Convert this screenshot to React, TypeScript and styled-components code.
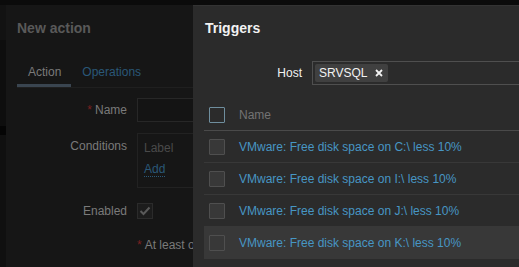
import React from "react";
import styled, { createGlobalStyle } from "styled-components";

const Global = createGlobalStyle`
  html, body { margin: 0; padding: 0; background: #0b0b0b; overflow: hidden; }
  body { font-family: "Liberation Sans", Arial, sans-serif; font-size: 12px; }
  * { box-sizing: border-box; }
`;

const Desktop = styled.div`
  position: relative;
  width: 519px;
  height: 267px;
  overflow: hidden;
  background: linear-gradient(to bottom, #0b0b0b 0, #0b0b0b 5px, #121212 5px, #121212 40px, #0e0e0e 40px, #0e0e0e 126px, #050505 126px, #050505 135px, #101010 135px);
`;

const BackDialog = styled.div`
  position: absolute;
  left: 6px;
  top: 5px;
  width: 187px;
  height: 300px;
  overflow: hidden;
  background: #161616;
  display: flex;
  flex-direction: column;
`;

const BackTitle = styled.div`
  height: 44px;
  padding: 1px 11px 0;
  display: flex;
  align-items: center;
  font-size: 14px;
  font-weight: bold;
  color: #595959;
  white-space: nowrap;
`;

const TabBar = styled.div`
  margin: 0 0 0 11px;
  width: 400px;
  display: flex;
  height: 39px;
  padding-top: 12px;
  border-bottom: 1px solid #1f1f1f;
`;

const Tab = styled.div<{ $active?: boolean }>`
  padding: 0 10px 2px 11px;
  display: flex;
  align-items: center;
  height: 26px;
  font-size: 12px;
  color: ${(p) => (p.$active ? "#7a7a7a" : "#2a5878")};
  border-bottom: 3px solid ${(p) => (p.$active ? "#3a4550" : "transparent")};
`;

const BackForm = styled.div`
  display: grid;
  grid-template-columns: 121px 300px;
  column-gap: 10px;
  row-gap: 11px;
  padding-top: 10px;
  align-items: start;
`;

const BackLabel = styled.div<{ $h?: number }>`
  height: ${(p) => p.$h ?? 24}px;
  display: flex;
  align-items: center;
  justify-content: flex-end;
  color: #7a7a7a;
  font-size: 12px;
  line-height: 14px;
  white-space: nowrap;
`;

const Req = styled.span`
  color: #7a2020;
  margin-right: 3px;
`;

const BackInput = styled.div`
  width: 300px;
  height: 24px;
  border: 1px solid #272727;
  background: #141414;
`;

const CondBox = styled.div`
  width: 300px;
  height: 55px;
  border: 1px solid #222;
  padding: 7px 6px;
  display: flex;
  flex-direction: column;
  gap: 7px;
`;

const DimText = styled.div`
  color: #4a4a4a;
  font-size: 12px;
  line-height: 14px;
`;

const BackLink = styled.span`
  color: #2a5878;
  font-size: 12px;
  line-height: 14px;
  border-bottom: 1px dotted #2a5878;
  align-self: flex-start;
`;

const BackCheck = styled.div`
  margin-top: 4px;
  width: 16px;
  height: 16px;
  border: 1px solid #2b2b2b;
  background: #1c1c1c;
  display: flex;
  align-items: center;
  justify-content: center;
`;

const Note = styled.div`
  grid-column: 2;
  width: 56px;
  overflow: hidden;
  white-space: nowrap;
  color: #7a7a7a;
  font-size: 12px;
  padding-top: 4px;
`;

const FrontDialog = styled.div`
  position: absolute;
  left: 193px;
  top: 5px;
  width: 420px;
  height: 300px;
  background: #2b2b2b;
  border-top: 1px solid #333;
  display: flex;
  flex-direction: column;
`;

const FrontTitle = styled.div`
  height: 43px;
  padding: 0 12px;
  display: flex;
  align-items: center;
  font-size: 14px;
  font-weight: bold;
  color: #f2f2f2;
`;

const HostRow = styled.div`
  margin-top: 12px;
  display: grid;
  grid-template-columns: 109px 1fr;
  column-gap: 10px;
  align-items: center;
`;

const HostLabel = styled.div`
  text-align: right;
  color: #f2f2f2;
  font-size: 12px;
`;

const MultiSelect = styled.div`
  height: 24px;
  border: 1px solid #4f4f4f;
  background: #2b2b2b;
  padding: 2px;
  display: flex;
  align-items: center;
`;

const Chip = styled.div`
  height: 18px;
  padding: 0 5px 0 4px;
  background: #404040;
  border-radius: 2px;
  color: #f2f2f2;
  font-size: 12px;
  display: flex;
  align-items: center;
  gap: 8px;
`;

const Table = styled.div`
  margin: 14px 0 0 11px;
  display: flex;
  flex-direction: column;
`;

const Row = styled.div<{ $head?: boolean; $hover?: boolean }>`
  height: 32px;
  display: flex;
  align-items: center;
  padding-left: 5px;
  gap: 14px;
  background: ${(p) => (p.$hover ? "#383838" : "transparent")};
  border-bottom: 1px solid ${(p) => (p.$head ? "#4a4a4a" : "#383838")};
`;

const Box = styled.div<{ $focus?: boolean }>`
  width: 16px;
  height: 16px;
  flex: none;
  border: 1px solid ${(p) => (p.$focus ? "#6f8e9e" : "#4f4f4f")};
  background: ${(p) => (p.$focus ? "#2b2b2b" : "#383838")};
  border-radius: 1px;
`;

const HeadText = styled.span`
  color: #737373;
  font-size: 12px;
`;

const RowLink = styled.span`
  color: #4796c4;
  font-size: 12px;
`;

const triggers = [
  "VMware: Free disk space on C:\\ less 10%",
  "VMware: Free disk space on I:\\ less 10%",
  "VMware: Free disk space on J:\\ less 10%",
  "VMware: Free disk space on K:\\ less 10%",
];

export default function App() {
  return (
    <Desktop>
      <Global />
      <BackDialog>
        <BackTitle>New action</BackTitle>
        <TabBar>
          <Tab $active>Action</Tab>
          <Tab>Operations</Tab>
        </TabBar>
        <BackForm>
          <BackLabel>
            <Req>*</Req>Name
          </BackLabel>
          <BackInput />
          <BackLabel $h={26}>Conditions</BackLabel>
          <CondBox>
            <DimText>Label</DimText>
            <BackLink>Add</BackLink>
          </CondBox>
          <BackLabel>Enabled</BackLabel>
          <BackCheck>
            <svg width="12" height="10" viewBox="0 0 12 10">
              <path d="M1.5 5 L4.5 8 L10.5 1.5" fill="none" stroke="#5a5a5a" strokeWidth="2" />
            </svg>
          </BackCheck>
          <Note>
            <Req>*</Req>At least one operation must exist.
          </Note>
        </BackForm>
      </BackDialog>
      <FrontDialog>
        <FrontTitle>Triggers</FrontTitle>
        <HostRow>
          <HostLabel>Host</HostLabel>
          <MultiSelect>
            <Chip>
              SRVSQL
              <svg width="8" height="8" viewBox="0 0 8 8">
                <path d="M1 1 L7 7 M7 1 L1 7" stroke="#f2f2f2" strokeWidth="1.8" />
              </svg>
            </Chip>
          </MultiSelect>
        </HostRow>
        <Table>
          <Row $head>
            <Box $focus />
            <HeadText>Name</HeadText>
          </Row>
          {triggers.map((t, i) => (
            <Row key={t} $hover={i === triggers.length - 1}>
              <Box />
              <RowLink>{t}</RowLink>
            </Row>
          ))}
        </Table>
      </FrontDialog>
    </Desktop>
  );
}
